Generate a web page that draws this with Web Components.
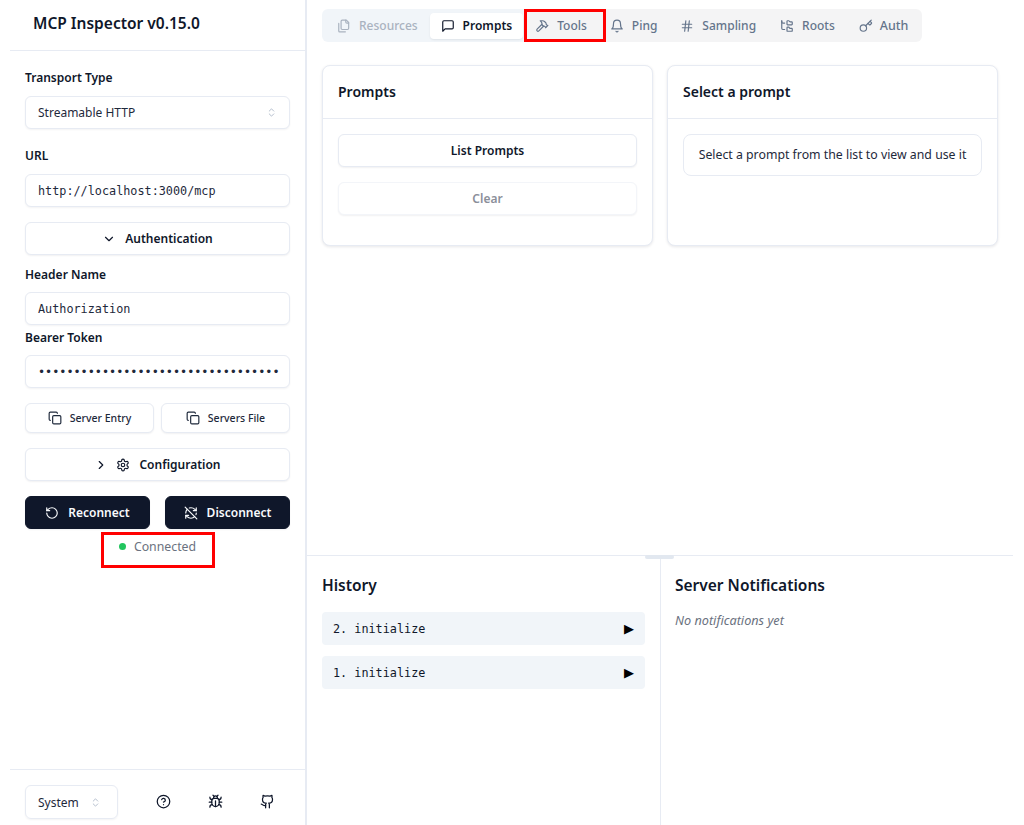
<!doctype html>
<html lang="en">
<head>
<meta charset="UTF-8">
<title>MCP Inspector</title>
<style>
  html, body { margin: 0; height: 100%; background: #fff; }
  html { --ui: "Noto Sans", sans-serif; --mono: "DejaVu Sans Mono", monospace; }
  body { font-family: var(--ui); color: #0f172a; overflow: hidden; }
</style>
</head>
<body>
<inspector-app>
  <inspector-sidebar slot="side"></inspector-sidebar>
  <inspector-tabs slot="tabs"></inspector-tabs>
  <div slot="cards" style="display:contents">
    <inspector-card heading="Prompts" style="width:331px">
      <inspector-button full>List Prompts</inspector-button>
      <inspector-button full disabled style="margin-top:15px">Clear</inspector-button>
    </inspector-card>
    <inspector-card heading="Select a prompt" style="width:331px">
      <inspector-note>Select a prompt from the list to view and use it</inspector-note>
    </inspector-card>
  </div>
  <inspector-history slot="bottom"></inspector-history>
</inspector-app>
<script>
  const ICONS = {
    updown: '<path d="m7 15 5 5 5-5"/><path d="m7 9 5-5 5 5"/>',
    down: '<path d="m6 9 6 6 6-6"/>',
    right: '<path d="m9 18 6-6-6-6"/>',
    copy: '<rect width="14" height="14" x="8" y="8" rx="2" ry="2"/><path d="M4 16c-1.1 0-2-.9-2-2V4c0-1.1.9-2 2-2h10c1.1 0 2 .9 2 2"/>',
    gear: '<path d="M12.22 2h-.44a2 2 0 0 0-2 2v.18a2 2 0 0 1-1 1.73l-.43.25a2 2 0 0 1-2 0l-.15-.08a2 2 0 0 0-2.73.73l-.22.38a2 2 0 0 0 .73 2.73l.15.1a2 2 0 0 1 1 1.72v.51a2 2 0 0 1-1 1.74l-.15.09a2 2 0 0 0-.73 2.73l.22.38a2 2 0 0 0 2.73.73l.15-.08a2 2 0 0 1 2 0l.43.25a2 2 0 0 1 1 1.73V20a2 2 0 0 0 2 2h.44a2 2 0 0 0 2-2v-.18a2 2 0 0 1 1-1.73l.43-.25a2 2 0 0 1 2 0l.15.08a2 2 0 0 0 2.73-.73l.22-.39a2 2 0 0 0-.73-2.73l-.15-.08a2 2 0 0 1-1-1.74v-.5a2 2 0 0 1 1-1.74l.15-.09a2 2 0 0 0 .73-2.73l-.22-.38a2 2 0 0 0-2.73-.73l-.15.08a2 2 0 0 1-2 0l-.43-.25a2 2 0 0 1-1-1.73V4a2 2 0 0 0-2-2z"/><circle cx="12" cy="12" r="3"/>',
    reconnect: '<path d="M3 12a9 9 0 1 0 9-9 9.75 9.75 0 0 0-6.74 2.74L3 8"/><path d="M3 3v5h5"/>',
    disconnect: '<path d="M21 8L18.74 5.74A9.75 9.75 0 0 0 12 3C11 3 10.03 3.16 9.13 3.45"/><path d="M8 16H3v5"/><path d="M3 12C3 9.51 4 7.26 5.64 5.64"/><path d="m3 16 2.26 2.26A9.75 9.75 0 0 0 12 21c2.49 0 4.74-1 6.36-2.64"/><path d="M21 12c0 1-.16 1.97-.45 2.87"/><path d="M21 3v5h-5"/><path d="M22 22 2 2"/>',
    help: '<circle cx="12" cy="12" r="10"/><path d="M9.09 9a3 3 0 0 1 5.83 1c0 2-3 3-3 3"/><path d="M12 17h.01"/>',
    bug: '<path d="m8 2 1.88 1.88"/><path d="M14.12 3.88 16 2"/><path d="M9 7.13v-1a3.003 3.003 0 1 1 6 0v1"/><path d="M12 20c-3.3 0-6-2.7-6-6v-3a4 4 0 0 1 4-4h4a4 4 0 0 1 4 4v3c0 3.3-2.7 6-6 6"/><path d="M12 20v-9"/><path d="M6.53 9C4.6 8.8 3 7.1 3 5"/><path d="M6 13H2"/><path d="M3 21c0-2.1 1.7-3.9 3.8-4"/><path d="M20.97 5c0 2.1-1.6 3.8-3.5 4"/><path d="M22 13h-4"/><path d="M17.2 17c2.1.1 3.8 1.9 3.8 4"/>',
    github: '<path d="M15 22v-4a4.8 4.8 0 0 0-1-3.5c3 0 6-2 6-5.5.08-1.25-.27-2.48-1-3.5.28-1.15.28-2.35 0-3.5 0 0-1 0-3 1.5-2.64-.5-5.36-.5-8 0C6 2 5 2 5 2c-.3 1.15-.3 2.35 0 3.5A5.4 5.4 0 0 0 4 9c0 3.5 3 5.5 6 5.5-.39.49-.68 1.05-.85 1.65-.17.6-.22 1.23-.15 1.85v4"/><path d="M9 18c-4.51 2-5-2-7-2"/>',
    files: '<path d="M20 7h-3a2 2 0 0 1-2-2V2"/><path d="M9 18a2 2 0 0 1-2-2V4a2 2 0 0 1 2-2h7l4 4v10a2 2 0 0 1-2 2Z"/><path d="M3 7.6v12.8A1.6 1.6 0 0 0 4.6 22h9.8"/>',
    message: '<path d="M21 15a2 2 0 0 1-2 2H7l-4 4V5a2 2 0 0 1 2-2h14a2 2 0 0 1 2 2z"/>',
    hammer: '<path d="m15 12-8.373 8.373a1 1 0 1 1-3-3L12 9"/><path d="m18 15 4-4"/><path d="m21.5 11.5-1.914-1.914A2 2 0 0 1 19 8.172V7l-2.26-2.26a6 6 0 0 0-4.202-1.756L9 2.96l.92.82A6.18 6.18 0 0 1 12 8.4V10l2 2h1.172a2 2 0 0 1 1.414.586L18.5 14.5"/>',
    bell: '<path d="M6 8a6 6 0 0 1 12 0c0 7 3 9 3 9H3s3-2 3-9"/><path d="M10.3 21a1.94 1.94 0 0 0 3.4 0"/>',
    hash: '<line x1="4" x2="20" y1="9" y2="9"/><line x1="4" x2="20" y1="15" y2="15"/><line x1="10" x2="8" y1="3" y2="21"/><line x1="16" x2="14" y1="3" y2="21"/>',
    folders: '<path d="M13 10h7a1 1 0 0 0 1-1V6a1 1 0 0 0-1-1h-2.5a1 1 0 0 1-.8-.4l-.9-1.2A1 1 0 0 0 15 3h-2a1 1 0 0 0-1 1v5a1 1 0 0 0 1 1Z"/><path d="M13 21h7a1 1 0 0 0 1-1v-3a1 1 0 0 0-1-1h-2.88a1 1 0 0 1-.9-.55l-.44-.9A1 1 0 0 0 15 14h-2a1 1 0 0 0-1 1v5a1 1 0 0 0 1 1Z"/><path d="M3 3v2c0 1.1.9 2 2 2h3"/><path d="M3 3v13c0 1.1.9 2 2 2h3"/>',
    key: '<path d="m15.5 7.5 2.3 2.3a1 1 0 0 0 1.4 0l2.1-2.1a1 1 0 0 0 0-1.4L19 4"/><path d="m21 2-9.6 9.6"/><circle cx="7.5" cy="15.5" r="5.5"/>'
  };
  const icon = (name, size, sw = 2) => `<svg xmlns="http://www.w3.org/2000/svg" width="${size}" height="${size}" viewBox="0 0 24 24" fill="none" stroke="currentColor" stroke-width="${sw}" stroke-linecap="round" stroke-linejoin="round">${ICONS[name]}</svg>`;

  class InspectorApp extends HTMLElement {
    constructor() {
      super();
      this.attachShadow({mode: 'open'}).innerHTML = `
        <style>
          :host { display: flex; width: 1013px; height: 825px; }
          .side { width: 305px; flex: none; border-right: 2px solid #e7ebf3; }
          .main { flex: 1; min-width: 0; display: flex; flex-direction: column; }
          .top { height: 555px; flex: none; box-sizing: border-box; padding: 9px 15px 0 15px; }
          .cards { display: flex; gap: 14px; margin-top: 23px; }
        </style>
        <div class="side"><slot name="side"></slot></div>
        <div class="main">
          <div class="top">
            <slot name="tabs"></slot>
            <div class="cards"><slot name="cards"></slot></div>
          </div>
          <slot name="bottom"></slot>
        </div>`;
    }
  }

  class InspectorButton extends HTMLElement {
    constructor() {
      super();
      this.attachShadow({mode: 'open'}).innerHTML = `
        <style>
          :host { display: flex; align-items: center; justify-content: center; gap: 9px; box-sizing: border-box; height: 33px;
            background: #fff; border: 1px solid #e7ebf3; border-radius: 6px; box-shadow: 0 1px 2px rgba(15,23,42,.06);
            font: 600 12px/16px var(--ui); color: #0f172a; }
          :host([disabled]) { color: #8b8f9a; border-color: #f3f5f9; }
          :host([dark]) { background: #0f172a; border-color: #0f172a; color: #f8fafc; }
          :host([light]) { font-weight: 500; font-size: 10.5px; height: 30px; color: #1e293b; gap: 8px; }
          svg { display: block; }
        </style><slot name="icon"></slot><slot></slot>`;
    }
  }

  class InspectorField extends HTMLElement {
    constructor() {
      super();
      this.attachShadow({mode: 'open'});
    }
    connectedCallback() {
      const mono = this.hasAttribute('mono');
      this.shadowRoot.innerHTML = `
        <style>
          :host { display: block; }
          .label { font: 600 12px/16px var(--ui); color: #0f172a; margin-bottom: var(--label-gap, 10px); }
          .box { box-sizing: border-box; height: 33px; display: flex; align-items: center; justify-content: space-between;
            padding: 0 12px; background: #fff; border: 1px solid #e7ebf3; border-radius: 6px; box-shadow: 0 1px 2px rgba(15,23,42,.05);
            color: #1e293b; font: ${mono ? '400 11.8px var(--mono)' : '400 12px var(--ui)'}; white-space: nowrap; overflow: hidden; }
          svg { color: #94a3b8; display: block; }
        </style>
        <div class="label">${this.getAttribute('label')}</div>
        <div class="box"><span>${this.getAttribute('value')}</span>${this.hasAttribute('select') ? icon('updown', 11, 1.5) : ''}</div>`;
    }
  }

  class InspectorSidebar extends HTMLElement {
    constructor() {
      super();
      this.attachShadow({mode: 'open'}).innerHTML = `
        <style>
          :host { display: flex; flex-direction: column; height: 825px; box-sizing: border-box; padding-left: 10px; }
          header { height: 51px; box-sizing: border-box; border-bottom: 1px solid #e7ebf3; padding: 13px 0 0 23px;
            font: 600 15.5px/20px var(--ui); color: #0f172a; }
          .body { flex: 1; padding: 19px 15px 0 15px; display: flex; flex-direction: column; }
          .pair { display: flex; justify-content: space-between; }
          .status { display: flex; align-items: center; justify-content: center; gap: 8px; margin-top: 10px;
            font: 400 12.3px/16px var(--ui); color: #6b7280; }
          .status i { width: 7px; height: 7px; border-radius: 50%; background: #22c55e; margin-top: -2px; }
          .mark { position: absolute; left: 101px; top: 532px; width: 114px; height: 36px; box-sizing: border-box; border: 3px solid #f00; }
          footer { height: 56px; box-sizing: border-box; border-top: 1px solid #e7ebf3; padding: 15px 0 0 15px; display: flex; align-items: flex-start; }
          .theme { box-sizing: border-box; width: 93px; height: 34px; border: 1px solid #e7ebf3; border-radius: 6px; display: flex; align-items: center;
            justify-content: space-between; padding: 0 16px 0 12px; font: 400 12px var(--ui); color: #1e293b; box-shadow: 0 1px 2px rgba(15,23,42,.05); }
          .theme svg { color: #94a3b8; display: block; }
          .foot-icons { display: flex; gap: 37px; margin-left: 38px; padding-top: 9px; color: #0f172a; }
          .foot-icons svg { display: block; }
          inspector-button svg { display: block; }
        </style>
        <header>MCP Inspector v0.15.0</header>
        <div class="body">
          <inspector-field select label="Transport Type" value="Streamable HTTP"></inspector-field>
          <inspector-field mono label="URL" value="http://localhost:3000/mcp" style="margin-top:19px"></inspector-field>
          <inspector-button style="margin-top:15px"><span slot="icon">${icon('down', 14)}</span>Authentication</inspector-button>
          <inspector-field mono label="Header Name" value="Authorization" style="margin-top:12px;--label-gap:9px"></inspector-field>
          <inspector-field mono label="Bearer Token" value="••••••••••••••••••••••••••••••••••" style="margin-top:5px;--label-gap:9px"></inspector-field>
          <div class="pair" style="margin-top:15px">
            <inspector-button light style="width:129px"><span slot="icon">${icon('copy', 14)}</span>Server Entry</inspector-button>
            <inspector-button light style="width:129px"><span slot="icon">${icon('copy', 14)}</span>Servers File</inspector-button>
          </div>
          <inspector-button style="margin-top:15px"><span slot="icon" style="display:flex;gap:8px">${icon('right', 14)}${icon('gear', 14)}</span>Configuration</inspector-button>
          <div class="pair" style="margin-top:15px">
            <inspector-button dark style="width:125px"><span slot="icon">${icon('reconnect', 14)}</span>Reconnect</inspector-button>
            <inspector-button dark style="width:125px"><span slot="icon">${icon('disconnect', 14)}</span>Disconnect</inspector-button>
          </div>
          <div class="status"><i></i><span>Connected</span></div>
          <div class="mark"></div>
        </div>
        <footer>
          <div class="theme"><span>System</span>${icon('updown', 11, 1.5)}</div>
          <div class="foot-icons">${icon('help', 15)}${icon('bug', 15)}${icon('github', 15)}</div>
        </footer>`;
    }
  }

  class InspectorTabs extends HTMLElement {
    constructor() {
      super();
      const tabs = [['files', 'Resources', 'off'], ['message', 'Prompts', 'on'], ['hammer', 'Tools'], ['bell', 'Ping'], ['hash', 'Sampling'], ['folders', 'Roots'], ['key', 'Auth']];
      this.attachShadow({mode: 'open'}).innerHTML = `
        <style>
          :host { display: flex; gap: 1px; position: relative; width: fit-content; height: 33px; box-sizing: border-box; padding: 4px; border-radius: 6px;
            background: linear-gradient(90deg, #f1f5f9 204px, #f4f4f5 204px);
            font: 500 12px/16px var(--ui); color: #64748b; }
          .tab { display: flex; align-items: center; gap: 8px; padding: 0 11px; border-radius: 4px; height: 26px; }
          .tab svg { display: block; }
          .tab:nth-of-type(6), .tab:nth-of-type(7) { margin-left: 1px; }
          .tab:nth-of-type(7) { gap: 7px; padding-right: 10px; }
          .tab:nth-of-type(7) span { font-size: 12.5px; }
          .off { color: #a9b2bf; }
          .on { background: #fff; color: #0f172a; box-shadow: 0 1px 2px rgba(15,23,42,.08); font-weight: 600; }
          .mark { position: absolute; left: 202px; top: 0; width: 82px; height: 33px; box-sizing: border-box; border: 3px solid #f00; }
        </style>
        ${tabs.map(([i, t, c]) => `<div class="tab ${c || ''}">${icon(i, 14)}<span>${t}</span></div>`).join('')}
        <div class="mark"></div>`;
    }
  }

  class InspectorCard extends HTMLElement {
    constructor() {
      super();
      this.attachShadow({mode: 'open'}).innerHTML = `
        <style>
          :host { display: block; box-sizing: border-box; height: 180.5px; background: #fff; border: 1px solid #e7ebf3; border-radius: 8px; box-shadow: 0 1px 3px rgba(15,23,42,.1); }
          h3 { margin: 0; height: 53px; box-sizing: border-box; padding: 17px 15px 0; border-bottom: 1px solid #e7ebf3; font: 600 14px/18px var(--ui); color: #0f172a; }
          .content { padding: 15px; }
        </style>
        <h3>${this.getAttribute('heading')}</h3>
        <div class="content"><slot></slot></div>`;
    }
  }

  class InspectorNote extends HTMLElement {
    constructor() {
      super();
      this.attachShadow({mode: 'open'}).innerHTML = `
        <style>
          :host { display: flex; align-items: center; justify-content: center; height: 42px; box-sizing: border-box; border: 1px solid #e7ebf3; border-radius: 8px;
            font: 400 12.3px/16px var(--ui); color: #1e293b; white-space: nowrap; }
        </style><slot></slot>`;
    }
  }

  class InspectorHistory extends HTMLElement {
    constructor() {
      super();
      const row = t => `<div class="row"><span>${t}</span><b>▶</b></div>`;
      this.attachShadow({mode: 'open'}).innerHTML = `
        <style>
          :host { display: flex; position: relative; flex: 1; border-top: 1px solid #e7ebf3; }
          .grip { position: absolute; left: 338px; top: -1px; width: 29px; height: 4px; background: #e2e8f0; border-radius: 2px; }
          .hist { width: 354px; flex: none; box-sizing: border-box; padding: 19px 15px 0 15px; border-right: 1px solid #e7ebf3; }
          .notes { flex: 1; padding: 19px 14px; }
          h2 { margin: 0 0 17px; font: 600 15.5px/20px var(--ui); color: #0f172a; }
          .row { display: flex; justify-content: space-between; align-items: center; height: 33px; margin-bottom: 11px; padding: 0 11px; background: #f1f5f9; border-radius: 4px;
            font: 400 11.8px var(--mono); color: #0f172a; }
          .row b { font: 400 13px "DejaVu Sans", sans-serif; color: #000; }
          em { display: block; margin-top: 3px; font: italic 400 12.7px/16px var(--ui); color: #6b7280; }
        </style>
        <div class="grip"></div>
        <div class="hist"><h2>History</h2>${row('2. initialize')}${row('1. initialize')}</div>
        <div class="notes"><h2>Server Notifications</h2><em>No notifications yet</em></div>`;
    }
  }

  customElements.define('inspector-button', InspectorButton);
  customElements.define('inspector-field', InspectorField);
  customElements.define('inspector-sidebar', InspectorSidebar);
  customElements.define('inspector-tabs', InspectorTabs);
  customElements.define('inspector-card', InspectorCard);
  customElements.define('inspector-note', InspectorNote);
  customElements.define('inspector-history', InspectorHistory);
  customElements.define('inspector-app', InspectorApp);
</script>
</body>
</html>
